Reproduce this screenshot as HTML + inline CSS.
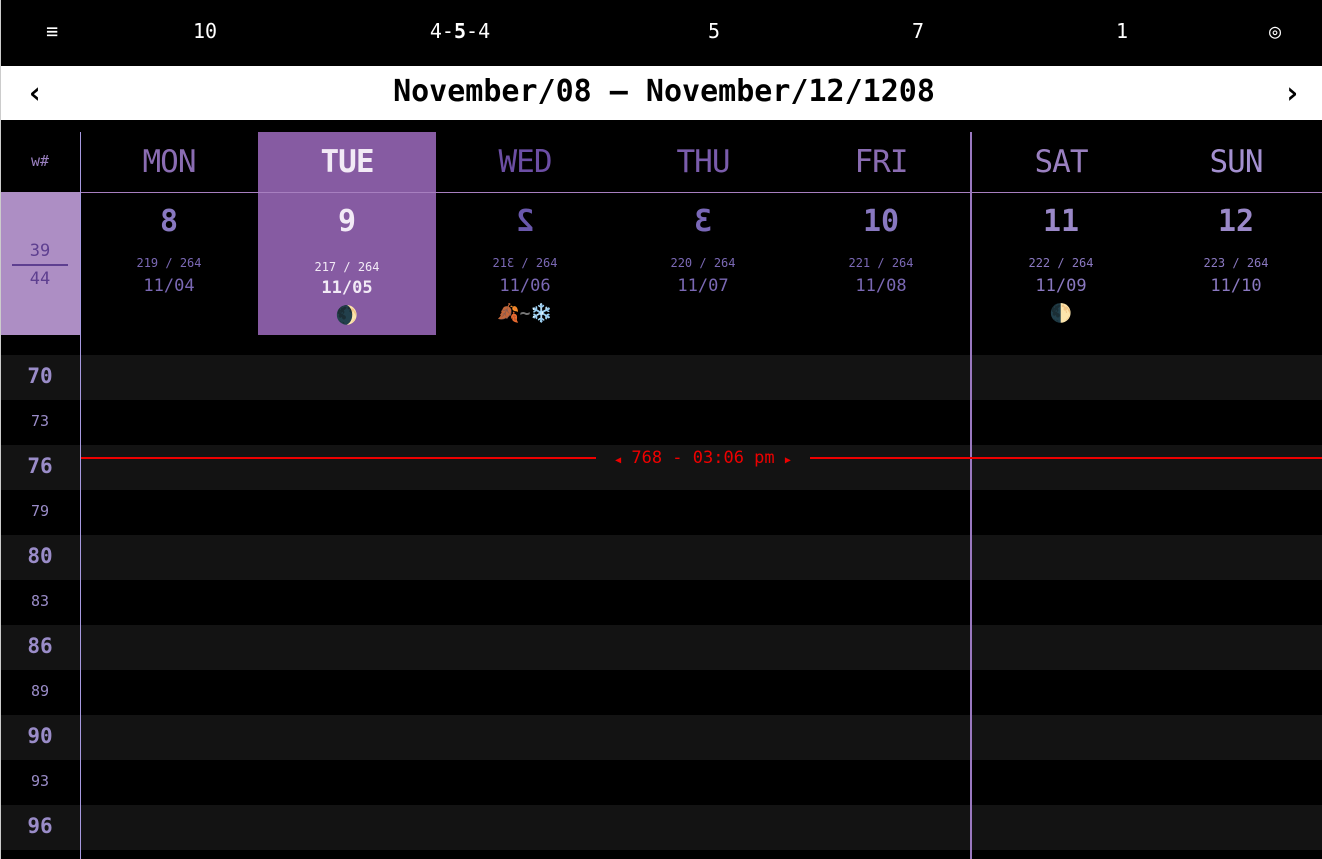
<!DOCTYPE html>
<html><head><meta charset="utf-8"><style>
*{margin:0;padding:0;box-sizing:border-box}
body{width:1322px;height:859px;background:#000;overflow:hidden;position:relative;font-family:"DejaVu Sans Mono","Liberation Mono",monospace;}
.a{position:absolute}
.c{text-align:center}
.top{top:0;left:0;width:1322px;height:66px;color:#fff;font-size:20px}
.top span{position:absolute;top:19px;transform:translateX(-50%)}
.bar{top:66px;left:0;width:1322px;height:54px;background:#fff;color:#000;font-size:30px;font-weight:bold}
.row{left:0;width:1322px;height:45px}
.g{background:#131313}
.lab{left:0;width:80px;text-align:center;color:#9a8cc8}
.day{top:132px;width:178px;text-align:center}
.dn{font-size:31px;color:#8a6cb2;height:60px;line-height:60px;letter-spacing:-1px}
.num{font-size:30px;font-weight:bold;color:#8878c0;margin-top:10px;line-height:40px}
.sm{font-size:12px;color:#7a68b4;margin-top:14px;line-height:14px}
.dt{font-size:17px;color:#7a68b4;margin-top:6px;line-height:20px}
.em{font-size:18px;margin-top:7px;line-height:22px}
.m{display:inline-block;transform:scaleX(-1)}
</style></head><body>
<div class="a top">
<span style="left:52px">≡</span><span style="left:205px">10</span><span style="left:460px">4-<b>5</b>-4</span><span style="left:714px">5</span><span style="left:918px">7</span><span style="left:1122px">1</span><span style="left:1275px">◎</span>
</div>
<div class="a bar"><span class="a" style="left:26px;top:10px">‹</span><div class="a c" style="left:0;width:1328px;top:8px">November/08 — November/12/1208</div><span class="a" style="left:1283px;top:10px">›</span></div>

<div class="a row" style="top:310px"></div>
<div class="a row g" style="top:355px"></div><div class="a lab" style="top:364px;font-size:21px;font-weight:bold">70</div>
<div class="a lab" style="top:412px;font-size:15px">73</div>
<div class="a row g" style="top:445px"></div><div class="a lab" style="top:454px;font-size:21px;font-weight:bold">76</div>
<div class="a lab" style="top:502px;font-size:15px">79</div>
<div class="a row g" style="top:535px"></div><div class="a lab" style="top:544px;font-size:21px;font-weight:bold">80</div>
<div class="a lab" style="top:592px;font-size:15px">83</div>
<div class="a row g" style="top:625px"></div><div class="a lab" style="top:634px;font-size:21px;font-weight:bold">86</div>
<div class="a lab" style="top:682px;font-size:15px">89</div>
<div class="a row g" style="top:715px"></div><div class="a lab" style="top:724px;font-size:21px;font-weight:bold">90</div>
<div class="a lab" style="top:772px;font-size:15px">93</div>
<div class="a row g" style="top:805px"></div><div class="a lab" style="top:814px;font-size:21px;font-weight:bold">96</div>

<div class="a" style="left:0;top:132px;width:1322px;height:203px;background:#000"></div>
<div class="a" style="left:258px;top:132px;width:178px;height:203px;background:#865ba2"></div>
<div class="a" style="left:0;top:192px;width:80px;height:143px;background:#ad8ec4"></div>
<div class="a" style="left:80px;top:192px;width:1242px;height:1px;background:#a77fc0"></div>
<div class="a" style="left:80px;top:132px;width:1px;height:727px;background:#a79ae0"></div>
<div class="a" style="left:970px;top:132px;width:2px;height:727px;background:#9a78c0"></div>
<div class="a" style="left:0;top:0;width:1px;height:859px;background:#ccc"></div>

<div class="a c" style="left:0;width:80px;top:152px;color:#9a80c0;font-size:15px">w#</div>
<div class="a c" style="left:0;width:80px;top:240px;color:#5e3f90;font-size:17px;line-height:22px">39<div style="margin:2px 12px;height:2px;background:#5e3f90"></div>44</div>

<div class="a day" style="left:80px"><div class="dn">MON</div><div class="num">8</div><div class="sm">219 / 264</div><div class="dt">11/04</div></div>
<div class="a day" style="left:258px"><div class="dn" style="color:#f2eaf6;font-weight:bold">TUE</div><div class="num" style="color:#f2eaf6">9</div><div class="sm" style="color:#f2eaf6;margin-top:18px">217 / 264</div><div class="dt" style="color:#f2eaf6;font-weight:bold;margin-top:4px">11/05</div><div class="em">🌒</div></div>
<div class="a day" style="left:436px"><div class="dn" style="color:#6c4ea4">WED</div><div class="num" style="color:#6a58ac"><span class="m">2</span></div><div class="sm">21<span class="m">3</span> / 264</div><div class="dt">11/06</div><div class="em">🍂<span style="color:#777;font-weight:bold">~</span>❄️</div></div>
<div class="a day" style="left:614px"><div class="dn" style="color:#7a5cac">THU</div><div class="num" style="color:#7a68b8"><span class="m">3</span></div><div class="sm">220 / 264</div><div class="dt">11/07</div></div>
<div class="a day" style="left:792px"><div class="dn">FRI</div><div class="num">10</div><div class="sm">221 / 264</div><div class="dt">11/08</div></div>
<div class="a day" style="left:972px"><div class="dn" style="color:#9a80c0">SAT</div><div class="num" style="color:#9a88c8">11</div><div class="sm" style="color:#8a78c0">222 / 264</div><div class="dt" style="color:#8a78c0">11/09</div><div class="em">🌓</div></div>
<div class="a day" style="left:1150px;width:172px"><div class="dn" style="color:#a490d0">SUN</div><div class="num" style="color:#9a88c8">12</div><div class="sm" style="color:#8a78c0">223 / 264</div><div class="dt" style="color:#8a78c0">11/10</div></div>

<div class="a" style="left:81px;top:457px;width:515px;height:2px;background:#e00"></div>
<div class="a" style="left:810px;top:457px;width:512px;height:2px;background:#e00"></div>
<div class="a" style="left:596px;top:448px;width:214px;color:#e00;font-size:17px;text-align:center"><span style="font-size:10px">◀</span> 768 - 03:06 pm <span style="font-size:10px">▶</span></div>
</body></html>
